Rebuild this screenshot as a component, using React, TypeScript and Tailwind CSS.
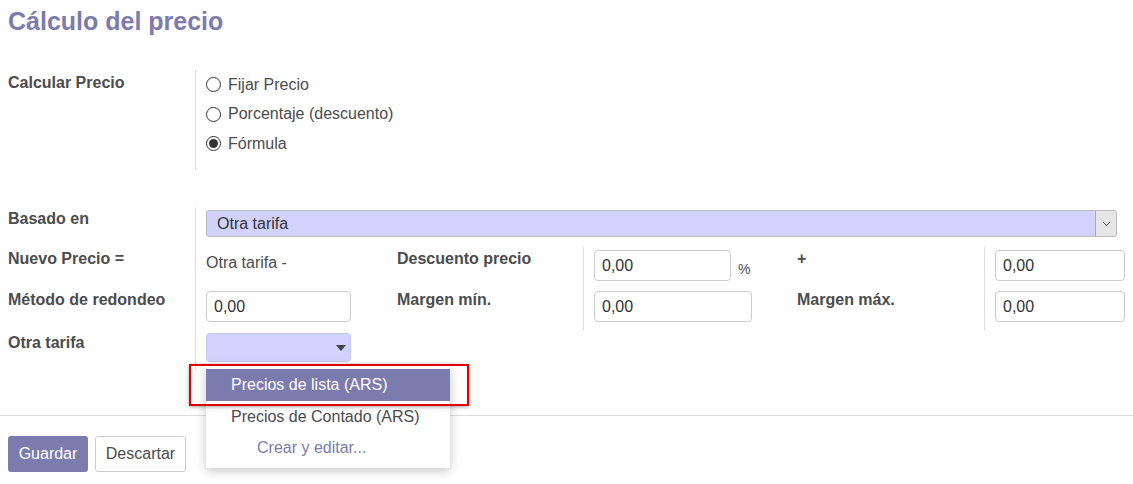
import React from "react";

function Radio({ checked, label }: { checked?: boolean; label: string }) {
  return (
    <div className="flex items-center h-[29.5px] gap-[7px]">
      <span className="w-[15px] h-[15px] rounded-full border border-[#333] bg-white flex items-center justify-center">
        {checked && <span className="w-[9px] h-[9px] rounded-full bg-[#333]" />}
      </span>
      <span className="text-[16px] text-[#4c4c4c]">{label}</span>
    </div>
  );
}

function NumInput({ w }: { w: string }) {
  return (
    <div className={`${w} h-[31px] border border-[#ccc] rounded-[4px] bg-white pl-[7px] flex items-center text-[16px] text-[#333]`}>
      0,00
    </div>
  );
}

export default function App() {
  return (
    <div
      className="relative w-[1133px] h-[484px] bg-white overflow-hidden text-[#4c4c4c]"
      style={{ fontFamily: '"Liberation Sans", Arial, sans-serif' }}
    >
      <div className="px-2 pt-[6px]">
        <h1 className="text-[25px] leading-[30px] font-bold text-[#7c7bad]">Cálculo del precio</h1>

        {/* Calcular precio */}
        <div className="mt-[34px] flex h-[100px]">
          <div className="w-[187px] shrink-0 pt-[3px] leading-[20px] text-[16px] font-bold">Calcular Precio</div>
          <div className="border-l border-[#ddd] pl-[10px]">
            <Radio label="Fijar Precio" />
            <Radio label="Porcentaje (descuento)" />
            <Radio label="Fórmula" checked />
          </div>
        </div>

        {/* Formula */}
        <div className="mt-[37px] flex">
          <div className="w-[187px] shrink-0 text-[16px] font-bold leading-[20px]">
            <div className="h-[40px] pt-[2px]">Basado en</div>
            <div className="h-[41px] pt-[2px]">Nuevo Precio =</div>
            <div className="h-[42px] pt-[2px]">Método de redondeo</div>
            <div className="h-[40px] pt-[3px]">Otra tarifa</div>
          </div>
          <div className="flex-1 min-w-0 border-l border-[#ddd] pl-[10px] pr-[8px]">
            <div className="h-[40px] pt-[3px]">
              <div className="h-[27px] flex border border-[#bbb] rounded-[3px] bg-[#d2d2ff] overflow-hidden">
                <div className="flex-1 pl-[10px] flex items-center text-[16px] text-[#333]">Otra tarifa</div>
                <div className="w-[21px] bg-[#e6e6e6] border-l border-[#aaa] flex items-center justify-center">
                  <svg width="9" height="6" viewBox="0 0 9 6">
                    <path d="M1 1l3.5 3.5L8 1" fill="none" stroke="#555" strokeWidth="1" />
                  </svg>
                </div>
              </div>
            </div>

            <div className="grid grid-cols-[191px_186px_214px_187px_1fr] h-[83px] leading-[20px] text-[16px]">
              <div>
                <div className="h-[41px] pt-[6px] text-[#4c4c4c]">Otra tarifa -</div>
                <div className="h-[42px] pt-[3px]">
                  <NumInput w="w-[145px]" />
                </div>
              </div>
              <div className="font-bold">
                <div className="h-[41px] pt-[2px]">Descuento precio</div>
                <div className="h-[42px] pt-[2px]">Margen mín.</div>
              </div>
              <div className="border-l border-[#ddd] pl-[10px]">
                <div className="h-[41px] pt-[3px] flex items-start gap-[7px]">
                  <NumInput w="w-[137px]" />
                  <span className="text-[14px] pt-[9px]">%</span>
                </div>
                <div className="h-[42px] pt-[3px]">
                  <NumInput w="w-[158px]" />
                </div>
              </div>
              <div className="font-bold">
                <div className="h-[41px] pt-[2px]">+</div>
                <div className="h-[42px] pt-[2px]">Margen máx.</div>
              </div>
              <div className="border-l border-[#ddd] pl-[10px]">
                <div className="h-[41px] pt-[3px]">
                  <NumInput w="w-[130px]" />
                </div>
                <div className="h-[42px] pt-[3px]">
                  <NumInput w="w-[130px]" />
                </div>
              </div>
            </div>

            <div className="h-[40px] pt-[3px]">
              <div className="w-[145px] h-[29px] rounded-[4px] border border-[#c8c8ee] bg-[#d2d2ff] flex items-center justify-end pr-[4px]">
                <svg width="10" height="6" viewBox="0 0 10 6">
                  <path d="M0 0h10L5 6z" fill="#444" />
                </svg>
              </div>
            </div>
          </div>
        </div>
      </div>

      {/* Footer */}
      <div className="mt-[45px] border-t border-[#ddd] pt-[20px] px-2 flex gap-[7px] text-[16px]">
        <button className="w-[80px] h-[36px] rounded-[3px] bg-[#7c7bad] text-white">Guardar</button>
        <button className="w-[91px] h-[36px] rounded-[3px] border border-[#ccc] bg-white text-[#4c4c4c]">Descartar</button>
      </div>

      {/* Autocomplete dropdown */}
      <div className="absolute left-[206px] top-[366px] w-[244px] h-[102px] bg-white shadow-[0_3px_10px_rgba(0,0,0,0.22)] pt-[3px] text-[16px]">
        <div className="h-[32px] bg-[#7c7bad] text-white pl-[25px] flex items-center">Precios de lista (ARS)</div>
        <div className="h-[32px] text-[#4c4c4c] pl-[25px] flex items-center">Precios de Contado (ARS)</div>
        <div className="h-[30px] text-[#7c7bad] pl-[51px] flex items-center">Crear y editar...</div>
      </div>

      {/* Highlight box */}
      <div className="absolute left-[189px] top-[364px] w-[280px] h-[42px] border-2 border-[#e00000] shadow-[0_1px_4px_rgba(0,0,0,0.35)]" />
    </div>
  );
}
